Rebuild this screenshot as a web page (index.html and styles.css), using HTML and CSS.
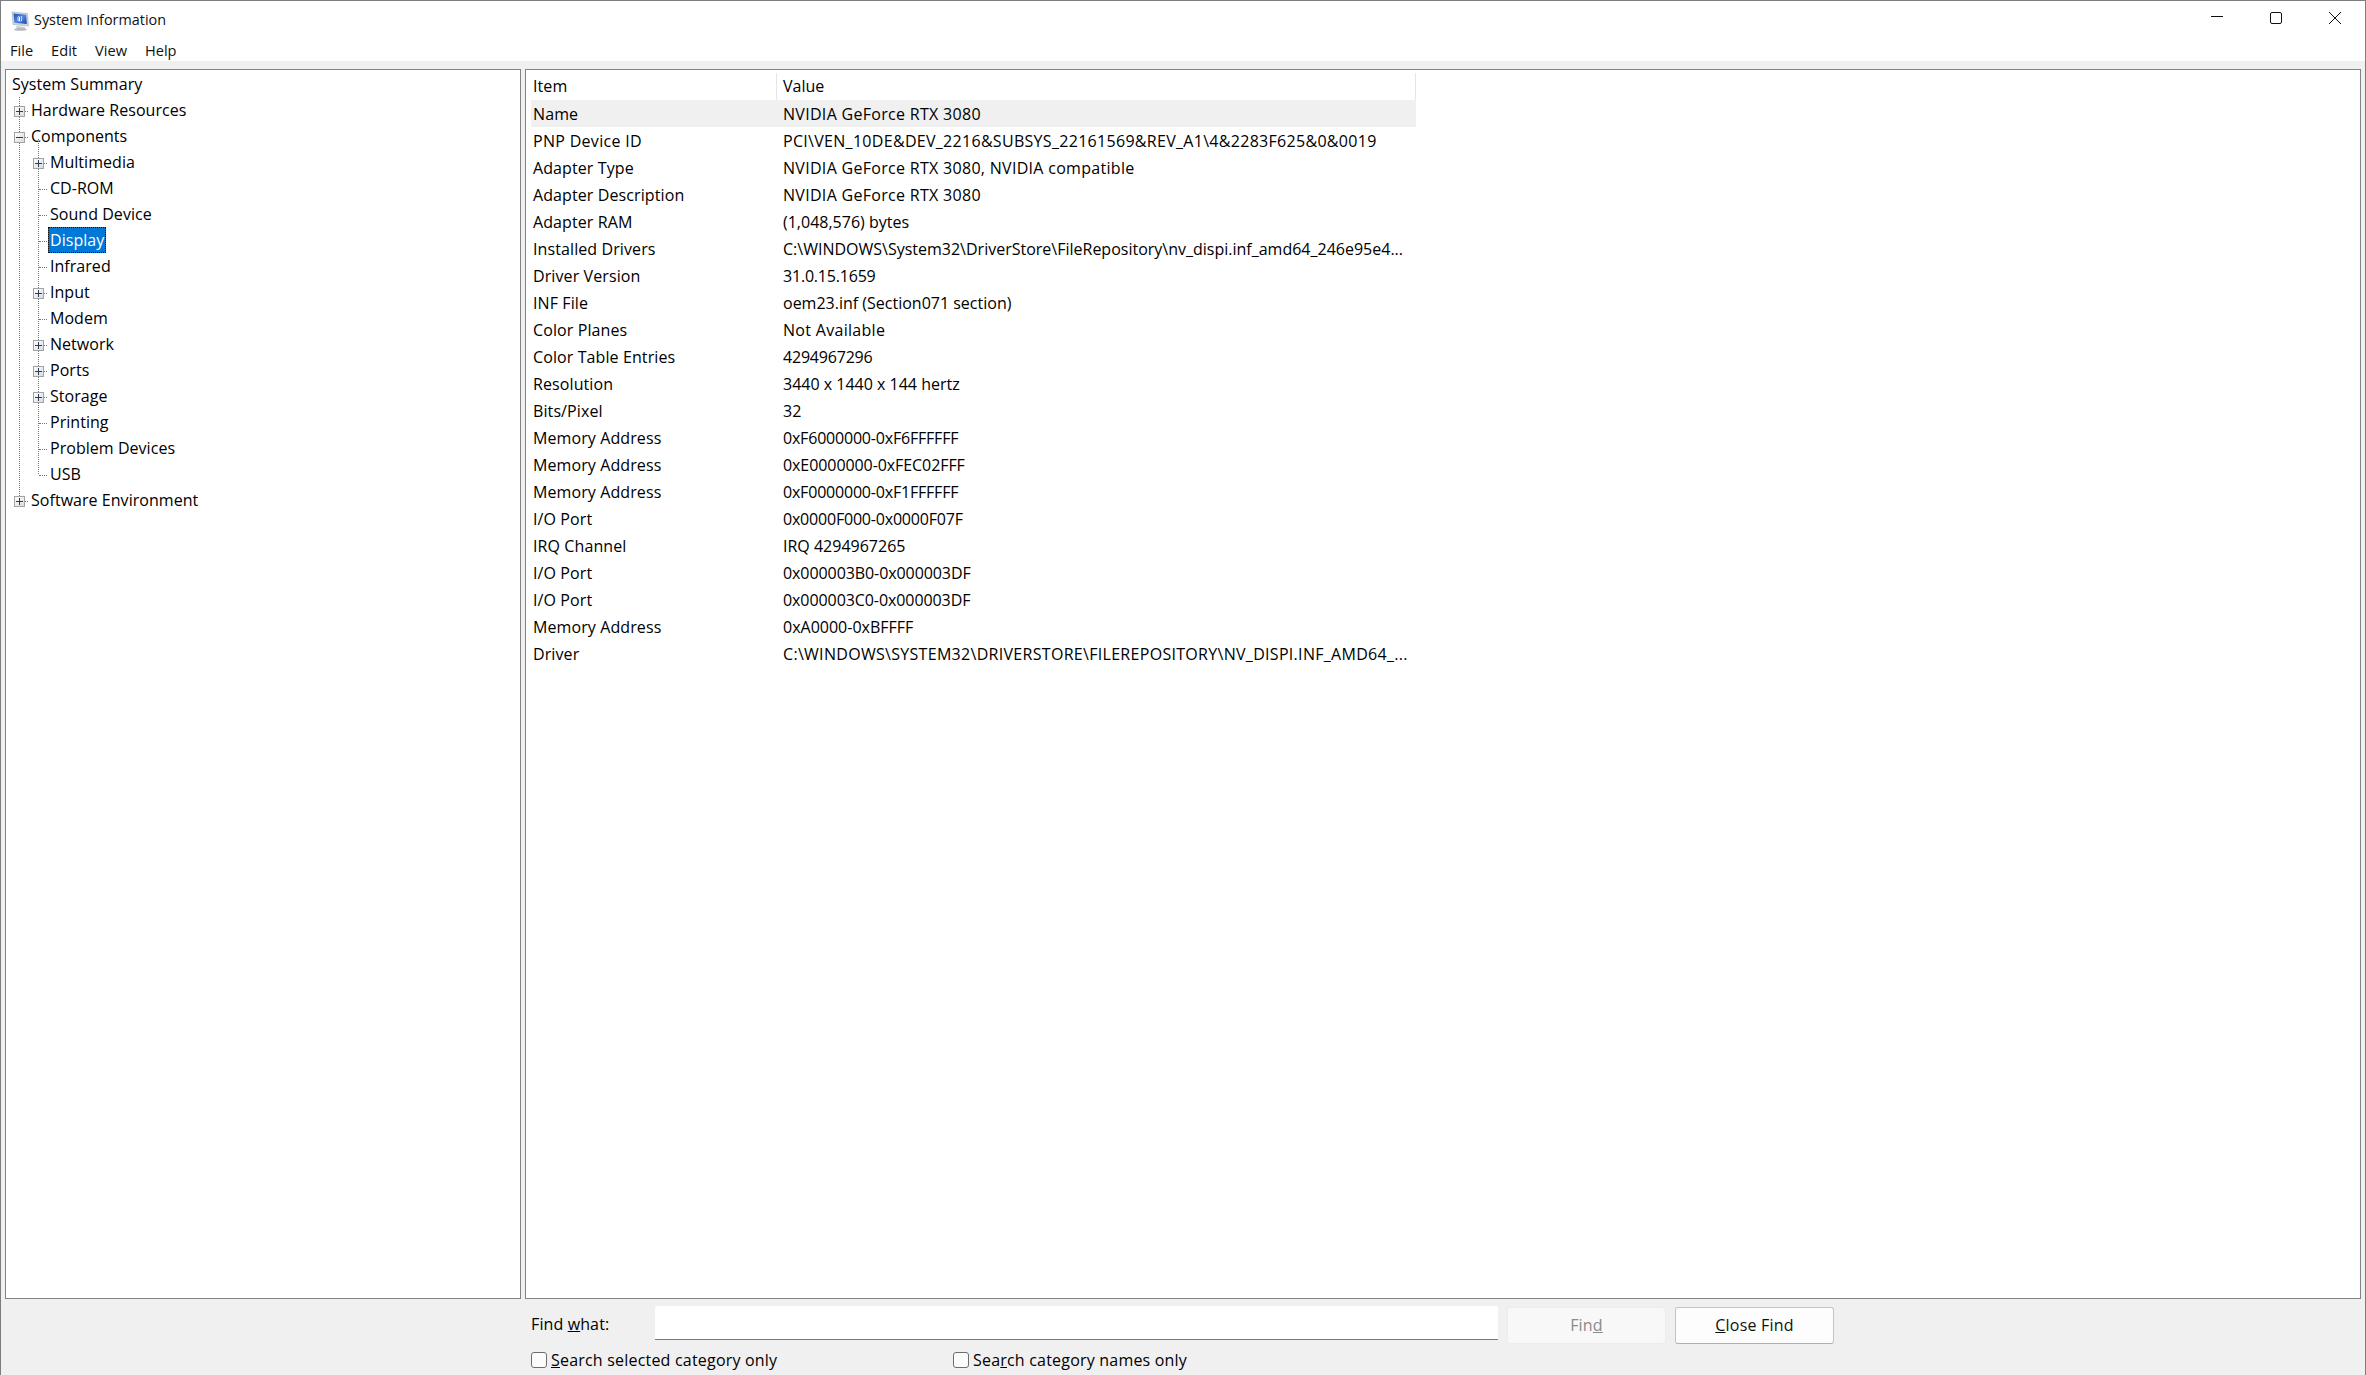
FILE: index.html
```html
<!DOCTYPE html>
<html lang="en">
<head>
<meta charset="utf-8">
<title>System Information</title>
<link rel="stylesheet" href="styles.css">
</head>
<body>
<div class="window">
  <header class="titlebar">
    <svg class="app-icon" width="18" height="20" viewBox="0 0 18 20">
      <defs><linearGradient id="scr" x1="0" y1="0" x2="1" y2="1"><stop offset="0" stop-color="#1d4fc0"/><stop offset=".5" stop-color="#4f86e0"/><stop offset="1" stop-color="#1a46a8"/></linearGradient></defs>
      <path d="M1 1 L16.5 2.5 L17.5 15 L2 13.5 Z" fill="#d3d6dc" stroke="#a6abb5" stroke-width=".6"/>
      <path d="M2.5 2.5 L15.2 3.8 L15.8 13 L3.4 11.8 Z" fill="url(#scr)"/>
      <path d="M8 5 C6.5 6.5 6.5 9 8 10.5 M10 5 C11 6.5 11 9 10 10.5" stroke="#dfeaff" stroke-width="1" fill="none"/>
      <path d="M8.5 6 v4" stroke="#ffffff" stroke-width="1" fill="none"/>
      <path d="M5 15 L14 16 L14 18 L6 18 Z" fill="#c8cbd1"/>
      <ellipse cx="9.5" cy="18.4" rx="6.5" ry="1.4" fill="#b6b9c0"/>
    </svg>
    <span class="title">System Information</span>
    <div class="controls">
      <svg width="14" height="14" viewBox="0 0 14 14"><path d="M1 5.5 H13" stroke="#111" fill="none"/></svg>
      <svg width="14" height="14" viewBox="0 0 14 14"><rect x="1.5" y="1.5" width="11" height="11" rx="1.5" stroke="#111" fill="none"/></svg>
      <svg width="14" height="14" viewBox="0 0 14 14"><path d="M1 1 L13 13 M13 1 L1 13" stroke="#111" fill="none"/></svg>
    </div>
  </header>
  <nav class="menubar">
    <span class="menu">File</span>
    <span class="menu">Edit</span>
    <span class="menu">View</span>
    <span class="menu">Help</span>
  </nav>
  <main class="panes">
    <section class="pane tree">
      <div class="row root"><span class="label">System Summary</span></div>
      <div class="nest">
        <div class="row"><span class="node"><span class="box plus"></span></span><span class="label">Hardware Resources</span></div>
        <div class="row"><span class="node"><span class="box minus"></span></span><span class="label">Components</span></div>
        <div class="nest inner">
          <div class="row"><span class="node"><span class="box plus"></span></span><span class="label">Multimedia</span></div>
          <div class="row"><span class="node"></span><span class="label">CD-ROM</span></div>
          <div class="row"><span class="node"></span><span class="label">Sound Device</span></div>
          <div class="row"><span class="node"></span><span class="label selected">Display</span></div>
          <div class="row"><span class="node"></span><span class="label">Infrared</span></div>
          <div class="row"><span class="node"><span class="box plus"></span></span><span class="label">Input</span></div>
          <div class="row"><span class="node"></span><span class="label">Modem</span></div>
          <div class="row"><span class="node"><span class="box plus"></span></span><span class="label">Network</span></div>
          <div class="row"><span class="node"><span class="box plus"></span></span><span class="label">Ports</span></div>
          <div class="row"><span class="node"><span class="box plus"></span></span><span class="label">Storage</span></div>
          <div class="row"><span class="node"></span><span class="label">Printing</span></div>
          <div class="row"><span class="node"></span><span class="label">Problem Devices</span></div>
          <div class="row"><span class="node"></span><span class="label">USB</span></div>
        </div>
        <div class="row"><span class="node"><span class="box plus"></span></span><span class="label">Software Environment</span></div>
      </div>
    </section>
    <section class="pane list">
      <div class="lrow head"><span class="cell">Item</span><span class="cell val">Value</span></div>
      <div class="lrow hot"><span class="cell">Name</span><span class="cell val wide">NVIDIA GeForce RTX 3080</span></div>
      <div class="lrow"><span class="cell wide">PNP Device ID</span><span class="cell val wide">PCI\VEN_10DE&amp;DEV_2216&amp;SUBSYS_22161569&amp;REV_A1\4&amp;2283F625&amp;0&amp;0019</span></div>
      <div class="lrow"><span class="cell">Adapter Type</span><span class="cell val wide">NVIDIA GeForce RTX 3080, NVIDIA compatible</span></div>
      <div class="lrow"><span class="cell">Adapter Description</span><span class="cell val wide">NVIDIA GeForce RTX 3080</span></div>
      <div class="lrow"><span class="cell">Adapter RAM</span><span class="cell val">(1,048,576) bytes</span></div>
      <div class="lrow"><span class="cell">Installed Drivers</span><span class="cell val">C:\WINDOWS\System32\DriverStore\FileRepository\nv_dispi.inf_amd64_246e95e4...</span></div>
      <div class="lrow"><span class="cell">Driver Version</span><span class="cell val tight">31.0.15.1659</span></div>
      <div class="lrow"><span class="cell">INF File</span><span class="cell val">oem23.inf (Section071 section)</span></div>
      <div class="lrow"><span class="cell">Color Planes</span><span class="cell val wide">Not Available</span></div>
      <div class="lrow"><span class="cell">Color Table Entries</span><span class="cell val tight">4294967296</span></div>
      <div class="lrow"><span class="cell">Resolution</span><span class="cell val">3440 x 1440 x 144 hertz</span></div>
      <div class="lrow"><span class="cell">Bits/Pixel</span><span class="cell val">32</span></div>
      <div class="lrow"><span class="cell">Memory Address</span><span class="cell val tight">0xF6000000-0xF6FFFFFF</span></div>
      <div class="lrow"><span class="cell">Memory Address</span><span class="cell val snug">0xE0000000-0xFEC02FFF</span></div>
      <div class="lrow"><span class="cell">Memory Address</span><span class="cell val tight">0xF0000000-0xF1FFFFFF</span></div>
      <div class="lrow"><span class="cell">I/O Port</span><span class="cell val tight">0x0000F000-0x0000F07F</span></div>
      <div class="lrow"><span class="cell">IRQ Channel</span><span class="cell val">IRQ 4294967265</span></div>
      <div class="lrow"><span class="cell">I/O Port</span><span class="cell val snug">0x000003B0-0x000003DF</span></div>
      <div class="lrow"><span class="cell">I/O Port</span><span class="cell val snug">0x000003C0-0x000003DF</span></div>
      <div class="lrow"><span class="cell">Memory Address</span><span class="cell val">0xA0000-0xBFFFF</span></div>
      <div class="lrow"><span class="cell">Driver</span><span class="cell val wide">C:\WINDOWS\SYSTEM32\DRIVERSTORE\FILEREPOSITORY\NV_DISPI.INF_AMD64_...</span></div>
    </section>
  </main>
  <footer class="find">
    <div class="find-row">
      <label class="find-label">Find <u>w</u>hat:</label>
      <div class="find-input"></div>
      <button class="btn disabled" type="button">Fin<u>d</u></button>
      <button class="btn" type="button"><u>C</u>lose Find</button>
    </div>
    <div class="check-row">
      <label class="check first"><span class="checkbox"></span><span><u>S</u>earch selected category only</span></label>
      <label class="check"><span class="checkbox"></span><span>Sea<u>r</u>ch category names only</span></label>
    </div>
  </footer>
</div>
</body>
</html>
```
FILE: styles.css
```css
* { box-sizing: border-box; }
html, body { margin: 0; padding: 0; }
body {
  width: 2366px;
  height: 1375px;
  overflow: hidden;
  font-family: "Open Sans", "Noto Sans", "Liberation Sans", sans-serif;
  font-size: 16px;
  color: #000;
}
.window {
  width: 2366px;
  height: 1375px;
  display: flex;
  flex-direction: column;
  background: #f0f0f0;
  border: 1px solid #7d7d7d;
  border-bottom: 0;
}
.titlebar {
  height: 39px;
  flex: none;
  display: flex;
  align-items: center;
  background: #fff;
  padding-left: 10px;
}
.app-icon { flex: none; }
.title { margin: -2px 0 0 5px; font-size: 14.4px; color: #111; }
.controls {
  margin-left: auto;
  padding-right: 23px;
  display: flex;
  gap: 45px;
  margin-top: -5px;
}
.menubar {
  height: 21px;
  flex: none;
  display: flex;
  align-items: flex-start;
  background: #fff;
  padding-left: 9px;
  font-size: 14.6px;
  gap: 18px;
  line-height: 21px;
  color: #111;
}
.panes {
  flex: 1;
  min-height: 0;
  display: flex;
  gap: 4px;
  padding: 8px 4px 0 4px;
}
.pane {
  background: #fff;
  border: 1px solid #828282;
  min-width: 0;
}
.tree { width: 516px; flex: none; padding: 1px 0 0 0; letter-spacing: .04px; }
.list { flex: 1; padding: 3px 0 0 5px; }

.row {
  height: 26px;
  display: flex;
  align-items: center;
}
.root { padding-left: 4px; }
.label {
  display: block;
  height: 26px;
  line-height: 26px;
  padding: 0 2px;
  white-space: nowrap;
}
.selected {
  background: #0078d7;
  color: #fff;
  outline: 1px dotted #111;
  outline-offset: -1px;
}
.nest { position: relative; margin-left: 4px; }
.nest::before {
  content: "";
  position: absolute;
  left: 9px;
  top: 0;
  bottom: 13px;
  border-left: 1px dotted #777;
}
.nest.inner { margin-left: 19px; }
.nest.inner::before { top: -10px; }
.node {
  position: relative;
  width: 19px;
  height: 26px;
  flex: none;
}
.node::after {
  content: "";
  position: absolute;
  left: 10px;
  width: 8px;
  top: 14px;
  border-top: 1px dotted #777;
}
.box {
  position: absolute;
  z-index: 1;
  left: 4px;
  top: 9px;
  width: 11px;
  height: 11px;
  border: 1px solid #a3a3a3;
  background: linear-gradient(135deg, #fff, #d8dbe2);
}
.box::before {
  content: "";
  position: absolute;
  left: 1px;
  top: 4px;
  width: 7px;
  height: 1px;
  background: #2b3a55;
}
.plus::after {
  content: "";
  position: absolute;
  left: 4px;
  top: 1px;
  width: 1px;
  height: 7px;
  background: #2b3a55;
}

.lrow {
  display: grid;
  grid-template-columns: 245px 640px;
  height: 27px;
  line-height: 29px;
  letter-spacing: .1px;
}
.head { height: 27px; line-height: 26px; width: 885px; border-right: 1px solid #e5e5e5; }
.head .val { border-left: 1px solid #e5e5e5; padding-left: 6px; }
.hot { background: #f0f0f0; width: 885px; }
.cell { padding-left: 2px; white-space: nowrap; overflow: hidden; }
.val { padding-left: 7px; letter-spacing: 0; }
.cell.wide { letter-spacing: .3px; }
.cell.tight { letter-spacing: -.2px; }
.cell.snug { letter-spacing: -.08px; }

.find {
  height: 76px;
  flex: none;
  padding: 8px 0 0 530px;
  background: #f0f0f0;
  letter-spacing: .2px;
}
.find-row { display: flex; align-items: flex-start; height: 37px; }
.find-label { width: 124px; line-height: 34px; letter-spacing: .12px; }
.find-input {
  width: 843px;
  height: 34px;
  background: #fff;
  border-bottom: 1px solid #7a7a7a;
  border-radius: 2px 2px 0 0;
  margin-top: -1px;
}
.btn {
  width: 159px;
  height: 37px;
  margin-left: 9px;
  margin-top: -.5px;
  font: inherit;
  letter-spacing: .2px;
  color: #111;
  background: #fdfdfd;
  border: 1px solid #c4c4c4;
  border-bottom-color: #b0b0b0;
  border-radius: 3px;
  padding: 0;
}
.btn.disabled {
  background: #f8f8f8;
  border-color: #ececec;
  color: #8a8a8a;
}
.check-row { display: flex; margin-top: 3px; }
.check { display: flex; align-items: center; height: 26px; gap: 4px; }
.check.first { width: 422px; }
.checkbox {
  width: 16px;
  height: 16px;
  flex: none;
  background: #fcfcfc;
  border: 1px solid #6d6d6d;
  border-radius: 3px;
}
```
